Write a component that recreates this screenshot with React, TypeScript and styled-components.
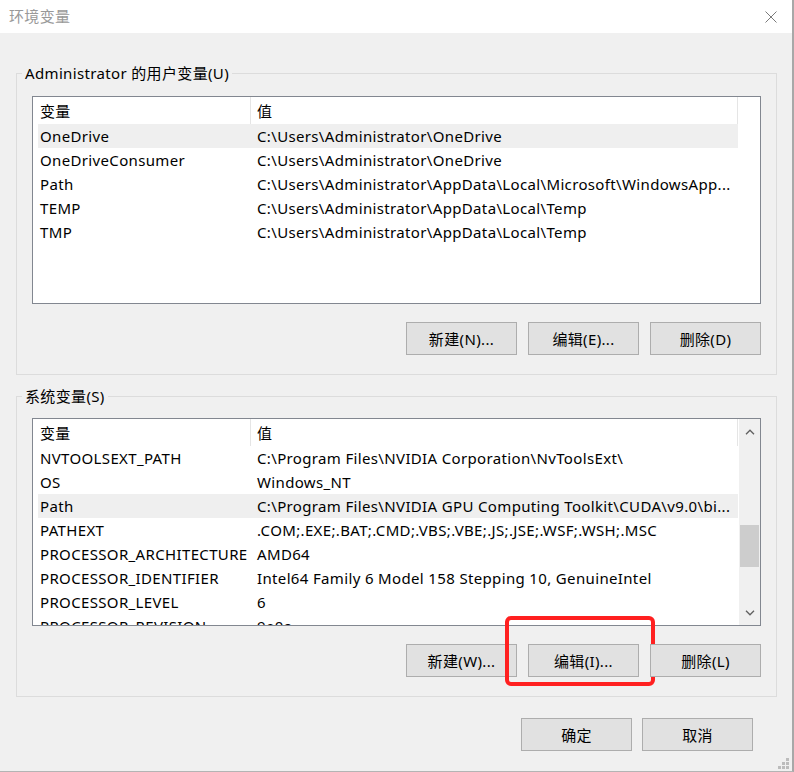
import React from 'react'
import styled, { createGlobalStyle } from 'styled-components'

const GlobalStyle = createGlobalStyle`
  html, body {
    margin: 0;
    padding: 0;
    background: #f0f0f0;
  }
  body {
    font-family: "Noto Sans", "Noto Sans CJK SC", sans-serif;
    font-size: 15px;
    letter-spacing: 0.35px;
    color: #000;
  }
`

type EnvVar = { name: string; value: string; selected?: boolean }

const userVars: EnvVar[] = [
    { name: 'OneDrive', value: 'C:\\Users\\Administrator\\OneDrive', selected: true },
    { name: 'OneDriveConsumer', value: 'C:\\Users\\Administrator\\OneDrive' },
    { name: 'Path', value: 'C:\\Users\\Administrator\\AppData\\Local\\Microsoft\\WindowsApp...' },
    { name: 'TEMP', value: 'C:\\Users\\Administrator\\AppData\\Local\\Temp' },
    { name: 'TMP', value: 'C:\\Users\\Administrator\\AppData\\Local\\Temp' },
]

const systemVars: EnvVar[] = [
    { name: 'NVTOOLSEXT_PATH', value: 'C:\\Program Files\\NVIDIA Corporation\\NvToolsExt\\' },
    { name: 'OS', value: 'Windows_NT' },
    { name: 'Path', value: 'C:\\Program Files\\NVIDIA GPU Computing Toolkit\\CUDA\\v9.0\\bi...', selected: true },
    { name: 'PATHEXT', value: '.COM;.EXE;.BAT;.CMD;.VBS;.VBE;.JS;.JSE;.WSF;.WSH;.MSC' },
    { name: 'PROCESSOR_ARCHITECTURE', value: 'AMD64' },
    { name: 'PROCESSOR_IDENTIFIER', value: 'Intel64 Family 6 Model 158 Stepping 10, GenuineIntel' },
    { name: 'PROCESSOR_LEVEL', value: '6' },
    { name: 'PROCESSOR_REVISION', value: '9e0a' },
]

export default function App() {
    return (
        <>
            <GlobalStyle />
            <Window>
                <TitleBar>
                    <Title>环境变量</Title>
                    <svg width="12" height="12" viewBox="0 0 12 12">
                        <path d="M0.5 0.5 L11.5 11.5 M11.5 0.5 L0.5 11.5" stroke="#7a7a7a" strokeWidth="1" fill="none" />
                    </svg>
                </TitleBar>

                <Body>
                    <GroupBox $top={0} $padTop={13}>
                        <Legend>Administrator 的用户变量(U)</Legend>
                        <VarList vars={userVars} />
                        <ButtonRow>
                            <Button>新建(N)...</Button>
                            <Button>编辑(E)...</Button>
                            <Button>删除(D)</Button>
                        </ButtonRow>
                    </GroupBox>

                    <GroupBox $top={11} $padTop={12}>
                        <Legend>系统变量(S)</Legend>
                        <VarList vars={systemVars} scroll />
                        <ButtonRow>
                            <Button>新建(W)...</Button>
                            <Button>
                                编辑(I)...
                                <Highlight />
                            </Button>
                            <Button>删除(L)</Button>
                        </ButtonRow>
                    </GroupBox>

                    <Footer>
                        <Button>确定</Button>
                        <Button>取消</Button>
                    </Footer>
                </Body>

                <Grip width="11" height="11" viewBox="0 0 11 11">
                    <rect x="8" y="0" width="3" height="3" />
                    <rect x="4" y="4" width="3" height="3" />
                    <rect x="8" y="4" width="3" height="3" />
                    <rect x="0" y="8" width="3" height="3" />
                    <rect x="4" y="8" width="3" height="3" />
                    <rect x="8" y="8" width="3" height="3" />
                </Grip>
            </Window>
        </>
    )
}

function VarList({ vars, scroll }: { vars: EnvVar[]; scroll?: boolean }) {
    return (
        <List>
            <ListContent>
                <HeaderRow>
                    <Cell $w={213} $pad={2} $divider>变量</Cell>
                    <Cell $w={487} $pad={6} $divider>值</Cell>
                </HeaderRow>
                {vars.map((v) => (
                    <Row key={v.name} $selected={v.selected}>
                        <Cell $w={213} $pad={2}>{v.name}</Cell>
                        <Cell $w={487} $pad={6}>{v.value}</Cell>
                    </Row>
                ))}
            </ListContent>
            {scroll && (
                <Scrollbar>
                    <ScrollArrow>
                        <svg width="10" height="6" viewBox="0 0 10 6">
                            <path d="M1 5.2 L5 1.2 L9 5.2" stroke="#606060" strokeWidth="1.3" fill="none" />
                        </svg>
                    </ScrollArrow>
                    <Track>
                        <Thumb />
                    </Track>
                    <ScrollArrow>
                        <svg width="10" height="6" viewBox="0 0 10 6">
                            <path d="M1 0.8 L5 4.8 L9 0.8" stroke="#606060" strokeWidth="1.3" fill="none" />
                        </svg>
                    </ScrollArrow>
                </Scrollbar>
            )}
        </List>
    )
}

const Window = styled.div`
  position: relative;
  width: 794px;
  height: 772px;
  box-sizing: border-box;
  border-right: 2px solid #a8a8a8;
  border-bottom: 1px solid #b4b4b4;
  background: #f0f0f0;
  display: flex;
  flex-direction: column;
  overflow: hidden;
`

const TitleBar = styled.div`
  height: 33px;
  flex-shrink: 0;
  background: #fff;
  display: flex;
  align-items: center;
  justify-content: space-between;
  padding: 0 15px 0 9px;
`

const Title = styled.span`
  color: #999;
  font-size: 15px;
  line-height: 1;
`

const Body = styled.div`
  display: flex;
  flex-direction: column;
  padding: 30px 15px 0 16px;
`

const GroupBox = styled.fieldset<{ $top: number; $padTop: number }>`
  margin: ${(p) => p.$top}px 0 0;
  padding: ${(p) => p.$padTop}px 15px 19px;
  border: 1px solid #dcdcdc;
  min-width: 0;
`

const Legend = styled.legend`
  padding: 0 3px;
  margin-left: -10px;
  line-height: 20px;
  font-size: 15px;
`

const List = styled.div`
  height: 208px;
  box-sizing: border-box;
  border: 1px solid #828790;
  background: #fff;
  display: flex;
  overflow: hidden;
`

const ListContent = styled.div`
  flex: 1;
  overflow: hidden;
  padding-left: 5px;
`

const HeaderRow = styled.div`
  display: flex;
  height: 27px;
  width: 700px;
`

const Row = styled.div<{ $selected?: boolean }>`
  display: flex;
  height: 24px;
  width: 700px;
  background: ${(p) => (p.$selected ? '#efefef' : 'transparent')};
`

const Cell = styled.div<{ $w: number; $pad: number; $divider?: boolean }>`
  width: ${(p) => p.$w}px;
  flex-shrink: 0;
  box-sizing: border-box;
  padding-left: ${(p) => p.$pad}px;
  display: flex;
  align-items: center;
  white-space: nowrap;
  overflow: hidden;
  border-right: ${(p) => (p.$divider ? '1px solid #e5e5e5' : 'none')};
`

const Scrollbar = styled.div`
  width: 21px;
  flex-shrink: 0;
  background: #f0f0f0;
  display: flex;
  flex-direction: column;
`

const ScrollArrow = styled.div`
  height: 25px;
  display: flex;
  align-items: center;
  justify-content: center;
`

const Track = styled.div`
  flex: 1;
`

const Thumb = styled.div`
  margin: 81px 1px 0;
  height: 42px;
  background: #cdcdcd;
`

const ButtonRow = styled.div`
  display: flex;
  justify-content: flex-end;
  gap: 11px;
  margin-top: 18px;
`

const Footer = styled.div`
  display: flex;
  justify-content: flex-end;
  gap: 10px;
  margin-top: 21px;
  padding-right: 24px;
`

const Button = styled.button`
  position: relative;
  width: 111px;
  height: 33px;
  padding: 0;
  background: #e1e1e1;
  border: 1px solid #adadad;
  border-radius: 0;
  font-family: inherit;
  font-size: 15px;
  letter-spacing: inherit;
  color: #000;
`

const Highlight = styled.span`
  position: absolute;
  left: -24px;
  top: -29px;
  width: 150px;
  height: 70px;
  box-sizing: border-box;
  border: 4px solid #ff2020;
  border-radius: 6px;
  pointer-events: none;
`

const Grip = styled.svg`
  position: absolute;
  right: 3px;
  bottom: 2px;
  fill: #bcbcbc;
`
